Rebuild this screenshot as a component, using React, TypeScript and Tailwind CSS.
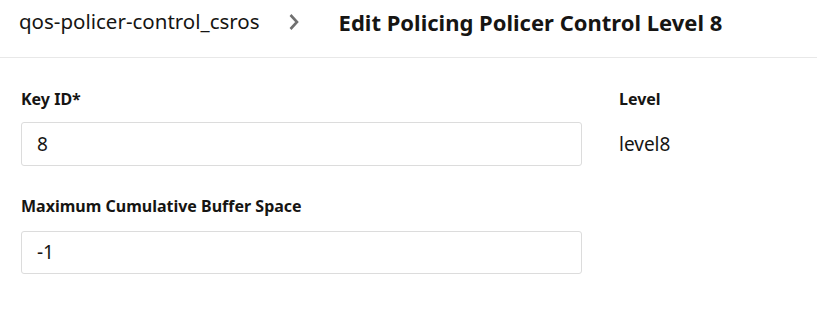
export default function App() {
  return (
    <div className="min-h-[328px] w-full bg-white font-['Noto_Sans',sans-serif] text-[#161513]">
      <div className="flex h-[58px] items-center border-b border-[#e8e8e8] px-[19px] pb-[14px]">
        <span className="text-[20.5px] leading-none">qos-policer-control_csros</span>
        <svg
          className="ml-[28px] mr-[39px]"
          width="12"
          height="18"
          viewBox="0 0 12 18"
          fill="none"
        >
          <path d="M2.5 2 L9 9 L2.5 16" stroke="#707070" strokeWidth="2.6" />
        </svg>
        <span className="text-[22px] font-bold leading-none">
          Edit Policing Policer Control Level 8
        </span>
      </div>

      <div className="grid grid-cols-[561px_1fr] gap-x-[37px] px-[21px] pt-[31px]">
        <div className="flex flex-col">
          <label className="mb-[13px] text-[16px] font-bold leading-[20px]">Key ID*</label>
          <div className="flex h-[44px] items-center rounded-[3px] border border-[#dcdcdc] px-[15px] text-[19px]">
            8
          </div>
          <label className="mb-[15px] mt-[30px] text-[16px] font-bold leading-[20px]">
            Maximum Cumulative Buffer Space
          </label>
          <div className="flex h-[43px] items-center rounded-[3px] border border-[#dcdcdc] px-[15px] text-[19px]">
            -1
          </div>
        </div>
        <div className="flex flex-col">
          <span className="mb-[13px] text-[16px] font-bold leading-[20px]">Level</span>
          <span className="flex h-[44px] items-center text-[19px]">level8</span>
        </div>
      </div>
    </div>
  );
}
